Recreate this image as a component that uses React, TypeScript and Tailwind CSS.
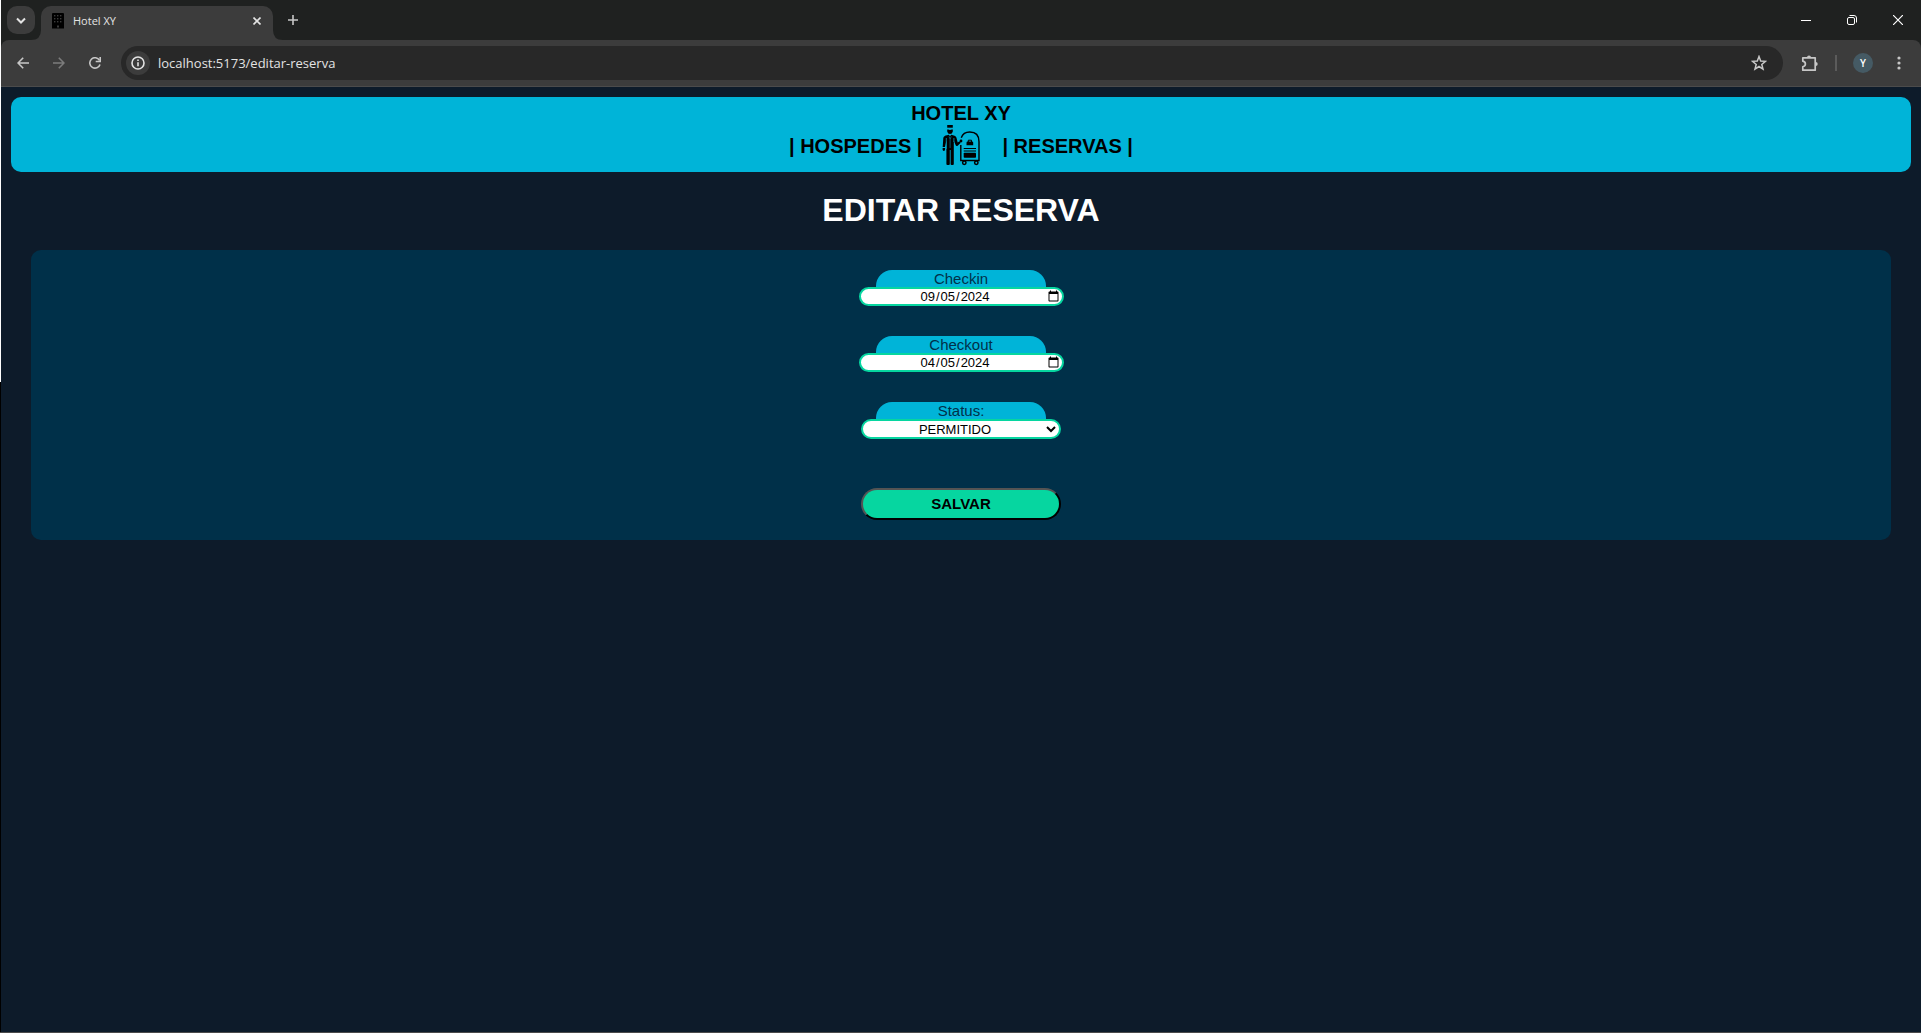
import React from 'react';

function BuildingIcon() {
  return (
    <svg width="14" height="16" viewBox="0 0 14 16" aria-hidden="true">
      <rect x="1" y="0" width="12" height="15" rx="1" fill="#000" />
      <rect x="1" y="14" width="12" height="1.5" fill="#000" />
      <g fill="#3c3c3c">
        {[2, 5, 8].map((y) =>
          [3, 6, 9].map((x) => <rect key={`${x}-${y}`} x={x} y={y} width="1.4" height="1.4" />),
        )}
        <rect x="6" y="12.500" width="2" height="2" />
      </g>
    </svg>
  );
}

function BellhopIcon() {
  return (
    <svg width="40" height="42" viewBox="0 0 40 42" aria-hidden="true">
      <g fill="#000">
        <path d="M5.200 0h5.600v2.700H5.200z" />
        <path d="M5.200 4.600h.9q1.900.900 3.800 0h.9v1.900Q10.200 9 8 9T5.200 6.500z" />
        <path d="M5 10.200 6.800 9.700 8 11.200l1.200-1.500 1.800.5q2.800.3 3.400 2.300l1.300 5 1.800-1.300 1.200 1.600-3 2.900q-1.500.7-2-.4L11.800 15.500V39q0 1-1 1H9.600q-1 0-1-1V25h-.8v14q0 1-1 1H5.400q-1 0-1-1V15.500L3 22H.7L1.300 13q.4-2.400 3.700-2.800z" />
        <path d="M.6 23h2.600l-.3 2.600-1.400.4L.6 25z" />
        <circle cx="19" cy="16" r="1.400" />
        <path d="M25.700 16.500h4.300q1.200 0 1.200 1.200v2.600h-6.700v-2.600q0-1.200 1.200-1.200z" />
        <rect x="21.700" y="27.800" width="12.300" height="5" rx=".8" />
      </g>
      <path d="M7 11.500 8.100 14l1.100-2.500M8.100 14v9" fill="none" stroke="#00b4d8" strokeWidth=".5" />
      <path d="M4.300 13v11M11.900 13v4" stroke="#00b4d8" strokeWidth=".7" />
      <path d="M26.300 17v-1.800h3.200V17" fill="none" stroke="#000" strokeWidth="1" />
      <path d="M21.700 23.500h12.300M21.700 26h12.300" fill="none" stroke="#000" strokeWidth="1.100" />
      <path d="M19.300 12.700Q21.200 7 27.800 7q9.200 0 9.200 9.700V35.500H18.800V20" fill="none" stroke="#000" strokeWidth="1.400" />
      <circle cx="22.300" cy="37.800" r="1.700" fill="#00b4d8" stroke="#000" strokeWidth="1.500" />
      <circle cx="34.300" cy="37.800" r="1.700" fill="#00b4d8" stroke="#000" strokeWidth="1.500" />
    </svg>
  );
}

const iconButton = 'flex size-7 items-center justify-center rounded-full text-[#c7c7c7]';

function TabStrip() {
  return (
    <div className="flex h-10 items-end bg-[#1f2120] pl-1.5">
      <button aria-label="Pesquisar guias" className="mb-1.5 flex size-7 items-center justify-center rounded-[10px] bg-[#3c3c3c] text-[#e3e3e3]">
        <svg width="10" height="7" viewBox="0 0 10 7" fill="none" stroke="currentColor" strokeWidth="2"><path d="m1 1.500 4 4 4-4" /></svg>
      </button>
      <div className="relative ml-1.5 flex h-[34px] w-[232px] items-center rounded-t-[10px] bg-[#3c3c3c] pb-1 pr-2.5 pl-2.5">
        <svg className="absolute bottom-0 -left-2.5" width="10" height="10" viewBox="0 0 10 10"><path d="M10 0v10H0Q10 10 10 0z" fill="#3c3c3c" /></svg>
        <svg className="absolute -right-2.5 bottom-0" width="10" height="10" viewBox="0 0 10 10"><path d="M0 0v10h10Q0 10 0 0z" fill="#3c3c3c" /></svg>
        <BuildingIcon />
        <span className="ml-2 flex-1 text-[11px] text-[#e3e3e3]">Hotel XY</span>
        <button aria-label="Fechar guia" className="flex size-3 items-center justify-center text-[#e3e3e3]">
          <svg width="8" height="8" viewBox="0 0 8 8" stroke="currentColor" strokeWidth="1.600"><path d="m.5.500 7 7m0-7-7 7" /></svg>
        </button>
      </div>
      <button aria-label="Nova guia" className="mb-1.5 ml-1.5 flex size-7 items-center justify-center text-[#c7c7c7]">
        <svg width="10" height="10" viewBox="0 0 10 10" stroke="currentColor" strokeWidth="1.600"><path d="M5 0v10M0 5h10" /></svg>
      </button>
      <div className="ml-auto flex h-10 text-white">
        <button aria-label="Minimizar" className="flex w-[46px] items-center justify-center">
          <svg width="10" height="10" viewBox="0 0 10 10" stroke="currentColor"><path d="M0 5.500h10" /></svg>
        </button>
        <button aria-label="Restaurar" className="flex w-[46px] items-center justify-center">
          <svg width="10" height="10" viewBox="0 0 10 10" fill="none" stroke="currentColor"><rect x=".5" y="2.500" width="7" height="7" rx="1.500" /><path d="M2.500.500H7Q9.500.500 9.500 3v4.500" /></svg>
        </button>
        <button aria-label="Fechar" className="flex w-[46px] items-center justify-center">
          <svg width="10" height="10" viewBox="0 0 10 10" stroke="currentColor" strokeWidth="1.200"><path d="m0 0 10 10M10 0 0 10" /></svg>
        </button>
      </div>
    </div>
  );
}

function Toolbar() {
  return (
    <div className="bg-[#1f2120]">
      <div className="flex h-[47px] items-center rounded-t-lg border-b border-[#4b4b4b] bg-[#3c3c3c] pr-2 pl-2">
        <button aria-label="Voltar" className={iconButton}>
          <svg width="12" height="12" viewBox="0 0 12 12" fill="none" stroke="currentColor" strokeWidth="1.600"><path d="M12 6H1M6.200.700 1 6l5.200 5.300" /></svg>
        </button>
        <button aria-label="Avançar" className="ml-2 flex size-7 items-center justify-center text-[#7c7c7c]">
          <svg width="12" height="12" viewBox="0 0 12 12" fill="none" stroke="currentColor" strokeWidth="1.600"><path d="M0 6h11M5.800.700 11 6l-5.200 5.300" /></svg>
        </button>
        <button aria-label="Recarregar" className="ml-2 flex size-7 items-center justify-center text-[#c7c7c7]">
          <svg width="12" height="12" viewBox="0 0 12 12" fill="none" stroke="currentColor" strokeWidth="1.600"><path d="M11 7.400A5.200 5.200 0 1 1 10.500 3.300" /><path d="M11.200 0v4.500H6.700" /></svg>
        </button>
        <div className="ml-3 flex h-[34px] flex-1 items-center rounded-full bg-[#282828] pr-3 pl-[5px]">
          <button aria-label="Informações do site" className="flex size-6 items-center justify-center rounded-full bg-[#3c3c3c] text-[#e3e3e3]">
            <svg width="14" height="14" viewBox="0 0 14 14" fill="none" stroke="currentColor" strokeWidth="1.600"><circle cx="7" cy="7" r="6" /><path d="M7 6.200v4M7 3.500v1.600" /></svg>
          </button>
          <input aria-label="Endereço" readOnly value="localhost:5173/editar-reserva" className="ml-2 block min-w-0 flex-1 bg-transparent pt-0.5 text-[13px] text-[#e3e3e3] outline-none" />
          <button aria-label="Adicionar aos favoritos" className="flex size-6 items-center justify-center text-[#c7c7c7]">
            <svg width="16" height="16" viewBox="0 0 16 16" fill="none" stroke="currentColor" strokeWidth="1.500"><path d="m8 1.500 1.700 4.500 4.800.300-3.700 3.100 1.200 4.700L8 11.500l-4 2.600 1.200-4.700L1.500 6.300 6.300 6z" /></svg>
          </button>
        </div>
        <button aria-label="Extensões" className="ml-3 flex size-7 items-center justify-center text-[#c7c7c7]">
          <svg width="17" height="17" viewBox="0 0 17 17"><path d="M1.800 2.800h12.400v12.400H1.800v-3.400q2.600-.6 2.600-2.800T1.800 6.200z" fill="none" stroke="currentColor" strokeWidth="1.700" strokeLinejoin="round" /><path d="M6 2.500a2 2 0 0 1 4 0zM14.700 7a2 2 0 0 1 0 4z" fill="currentColor" /></svg>
        </button>
        <div className="ml-3 h-4 w-0.5 bg-[#5b5b5b]" />
        <button aria-label="Perfil" className="ml-4 flex size-5 items-center justify-center rounded-full bg-[#455a64] text-[10px] font-semibold text-white">Y</button>
        <button aria-label="Menu" className="ml-3 flex size-7 items-center justify-center text-[#c7c7c7]">
          <svg width="4" height="14" viewBox="0 0 4 14" fill="currentColor"><circle cx="2" cy="2" r="1.600" /><circle cx="2" cy="7" r="1.600" /><circle cx="2" cy="12" r="1.600" /></svg>
        </button>
      </div>
    </div>
  );
}

const labelClass = 'block h-[17px] w-[170px] rounded-t-2xl bg-[#00b4d8] text-center text-[15px] leading-[17px] text-[#003049]';
const fieldClass = 'rounded-full border-2 border-[#06d6a0] bg-white text-center text-[13px] text-black outline-none';

function DateField({ id, label, value }: { id: string; label: string; value: string }) {
  return (
    <div className="flex flex-col items-center">
      <label htmlFor={id} className={labelClass}>{label}</label>
      <input
        id={id}
        type="date"
        defaultValue={value}
        className={`${fieldClass} ml-px h-[19px] w-[205px] px-0.5 leading-[15px] [&::-webkit-calendar-picker-indicator]:p-0 [&::-webkit-datetime-edit]:block [&::-webkit-datetime-edit]:p-0 [&::-webkit-datetime-edit]:text-center`}
      />
    </div>
  );
}

export default function App() {
  return (
    <div className="flex min-h-screen flex-col bg-[#0d1b2a]">
      <div className="flex flex-1">
        <div className="flex w-px flex-col bg-black"><div className="h-[382px] bg-white" /></div>
        <div className="flex min-w-0 flex-1 flex-col">
          <div className="font-['Open_Sans',sans-serif]">
            <TabStrip />
            <Toolbar />
          </div>
          <div className="flex-1 p-2.5 font-['Liberation_Sans',Arial,sans-serif]">
            <header className="flex h-[75px] flex-col items-center rounded-[10px] bg-[#00b4d8] pt-1 text-xl leading-6 font-bold text-black">
              <div>HOTEL XY</div>
              <nav className="flex items-center">
                <a href="#hospedes">| HOSPEDES |</a>
                <a href="#inicio" aria-label="Início" className="mx-5"><BellhopIcon /></a>
                <a href="#reservas">| RESERVAS |</a>
              </nav>
            </header>
            <main>
              <h1 className="mt-5 mb-[22px] text-center text-[32px] leading-9 font-bold text-white">EDITAR RESERVA</h1>
              <form className="mx-5 flex flex-col items-center rounded-[10px] bg-[#003049] py-5" onSubmit={(e) => e.preventDefault()}>
                <div className="flex flex-col items-center gap-[30px]">
                  <DateField id="checkin" label="Checkin" value="2024-09-05" />
                  <DateField id="checkout" label="Checkout" value="2024-04-05" />
                  <div className="flex flex-col items-center">
                    <label htmlFor="status" className={labelClass}>Status:</label>
                    <select id="status" className={`${fieldClass} h-5 w-[200px] leading-4`} defaultValue="PERMITIDO">
                      <option>PERMITIDO</option>
                    </select>
                  </div>
                </div>
                <button className="mt-[49px] h-8 w-[200px] rounded-full border-2 border-black bg-[#06d6a0] text-[15px] font-bold text-black [border-style:outset]">SALVAR</button>
              </form>
            </main>
          </div>
        </div>
      </div>
      <div className="h-px bg-[#4b4b4b]" />
    </div>
  );
}
